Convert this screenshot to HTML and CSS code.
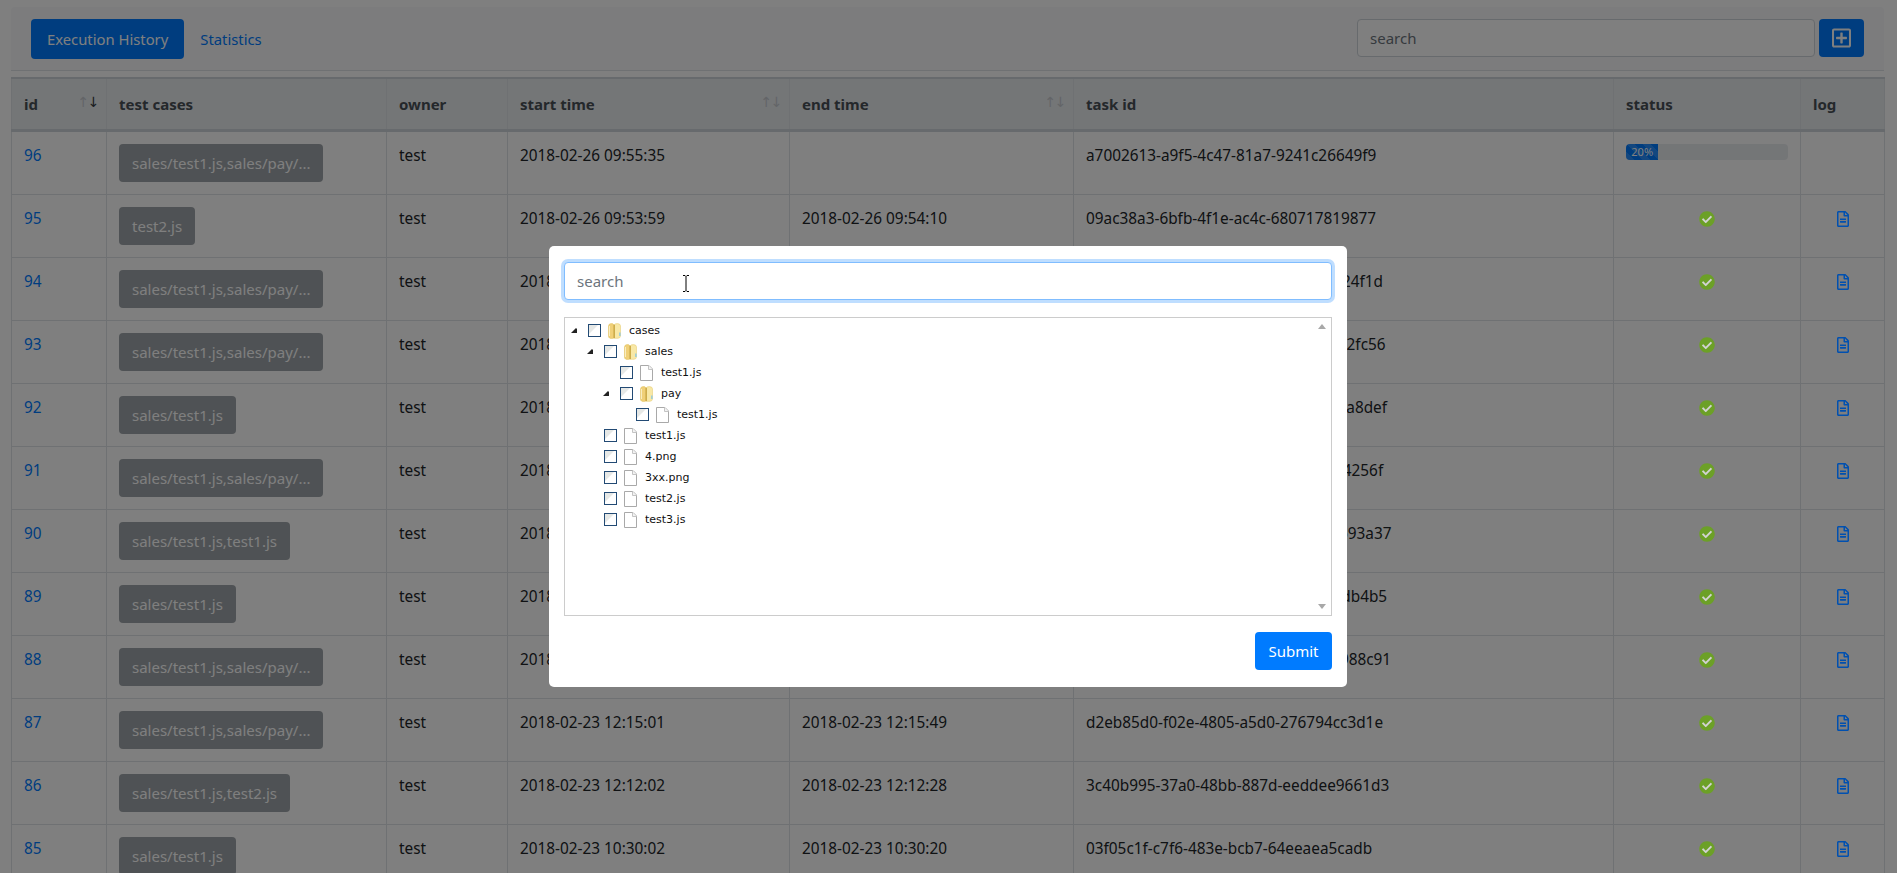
FILE: index.html
```html
<!DOCTYPE html>
<html>
	<head>
		<meta charset="UTF-8">
		<title>Execution History</title>
		<link rel="stylesheet" href="styles.css">
	</head>

	<body>

		<svg class="sprites" xmlns="http://www.w3.org/2000/svg">
			<symbol id="i-check" viewBox="0 0 512 512"><circle cx="256" cy="256" r="210" fill="#d2d2d2"/><path d="M504 256c0 136.967-111.033 248-248 248S8 392.967 8 256 119.033 8 256 8s248 111.033 248 248zM227.314 387.314l184-184c6.248-6.248 6.248-16.379 0-22.627l-22.627-22.627c-6.248-6.249-16.379-6.249-22.628 0L216 308.118l-70.059-70.059c-6.248-6.248-16.379-6.248-22.628 0l-22.627 22.627c-6.248 6.248-6.248 16.379 0 22.627l104 104c6.249 6.249 16.379 6.249 22.628.001z"/></symbol>
			<symbol id="i-log" viewBox="0 0 384 512"><path d="M288 248v28c0 6.6-5.4 12-12 12H108c-6.6 0-12-5.4-12-12v-28c0-6.6 5.4-12 12-12h168c6.6 0 12 5.4 12 12zm-12 72H108c-6.6 0-12 5.4-12 12v28c0 6.6 5.4 12 12 12h168c6.6 0 12-5.4 12-12v-28c0-6.6-5.4-12-12-12zm108-188.1V464c0 26.5-21.5 48-48 48H48c-26.5 0-48-21.5-48-48V48C0 21.5 21.5 0 48 0h204.1C264.8 0 277 5.1 286 14.1L369.9 98c9 8.9 14.1 21.2 14.1 33.9zm-128-80V128h76.1L256 51.9zM336 464V176H232c-13.3 0-24-10.7-24-24V48H48v416h288z"/></symbol>
			<symbol id="i-folder" viewBox="0 0 13 16">
				<path d="M.5 3Q.5 .8 3 .6 5.500 .5 6 2V15Q3 16 1.500 15 .5 14.500 .5 13Z" fill="#f0d078" stroke="#e3c566" stroke-width=".6"/>
				<path d="M6 2Q7 .6 9.500 .6 12.500 .8 12.500 3V13Q12.500 15 10 15.300H6Z" fill="#f8e8a6" stroke="#e8cf78" stroke-width=".6"/>
				<path d="M6.200 1.800V15" stroke="#c39f38" stroke-width="1.200" fill="none"/>
				<path d="M1.500 3V13" stroke="#f9edc0" stroke-width="1" fill="none"/>
				<path d="M11.200 9.500h1.300v3.500h-1.300z" fill="#8ac8e4"/>
			</symbol>
			<symbol id="i-file" viewBox="0 0 13 16">
				<path d="M.5.500H9L12.500 4V15.500H.5Z" fill="#fff" stroke="#a9a9a9"/>
				<path d="M8.500.500V4.500H12.500" fill="#f2f2f2" stroke="#c4c4c4"/>
			</symbol>
			<symbol id="i-check-box" viewBox="0 0 13 13">
				<rect x=".5" y=".5" width="12" height="12" fill="#fff" stroke="#224a74"/>
				<path d="M1 1H10L1 10Z" fill="#e6e8e6"/>
			</symbol>
			<symbol id="i-toggle" viewBox="0 0 6 5"><path d="M0 5 5 0 6 1V5Z"/></symbol>
		</svg>

		<nav class="topbar">
			<div class="tabs">
				<a class="tab tab-active">Execution History</a>
				<a class="tab">Statistics</a>
			</div>
			<div class="topbar-tools">
				<input class="field topbar-search" type="text" placeholder="search">
				<button class="btn btn-add">
					<svg width="19" height="22" viewBox="0 0 448 512"><path fill="currentColor" d="M352 240v32c0 6.600-5.400 12-12 12h-88v88c0 6.600-5.400 12-12 12h-32c-6.600 0-12-5.400-12-12v-88h-88c-6.600 0-12-5.400-12-12v-32c0-6.600 5.400-12 12-12h88v-88c0-6.600 5.400-12 12-12h32c6.600 0 12 5.400 12 12v88h88c6.600 0 12 5.400 12 12zm96-160v352c0 26.500-21.500 48-48 48H48c-26.500 0-48-21.500-48-48V80c0-26.500 21.500-48 48-48h352c26.500 0 48 21.500 48 48zm-48 346V86c0-3.300-2.700-6-6-6H54c-3.300 0-6 2.700-6 6v340c0 3.300 2.700 6 6 6h340c3.300 0 6-2.700 6-6z"/></svg>
				</button>
			</div>
		</nav>

		<table class="runs">
			<colgroup>
				<col class="col-id"><col class="col-cases"><col class="col-owner"><col class="col-start"><col class="col-end"><col class="col-task"><col class="col-status"><col class="col-log">
			</colgroup>
			<thead>
				<tr>
					<th class="sortable">id<span class="sort"><i>↑</i><i class="sort-on">↓</i></span></th>
					<th>test cases</th>
					<th>owner</th>
					<th class="sortable">start time<span class="sort"><i>↑</i><i>↓</i></span></th>
					<th class="sortable">end time<span class="sort"><i>↑</i><i>↓</i></span></th>
					<th>task id</th>
					<th>status</th>
					<th>log</th>
				</tr>
			</thead>
			<tbody>
				<tr>
					<td><a>96</a></td>
					<td><span class="case">sales/test1.js,sales/pay/...</span></td>
					<td>test</td>
					<td>2018-02-26 09:55:35</td>
					<td></td>
					<td>a7002613-a9f5-4c47-81a7-9241c26649f9</td>
					<td><div class="progress"><div class="progress-bar" style="width: 20%">20%</div></div></td>
					<td></td>
				</tr>
				<tr>
					<td><a>95</a></td>
					<td><span class="case">test2.js</span></td>
					<td>test</td>
					<td>2018-02-26 09:53:59</td>
					<td>2018-02-26 09:54:10</td>
					<td>09ac38a3-6bfb-4f1e-ac4c-680717819877</td>
					<td class="icon-cell"><svg class="ok"><use href="#i-check"/></svg></td>
					<td class="icon-cell"><svg class="log"><use href="#i-log"/></svg></td>
				</tr>
				<tr>
					<td><a>94</a></td>
					<td><span class="case">sales/test1.js,sales/pay/...</span></td>
					<td>test</td>
					<td>2018-02-26 09:50:12</td>
					<td>2018-02-26 09:50:48</td>
					<td>51d0e7d2-3ab4-4d19-9e06-7fb1a8124f1d</td>
					<td class="icon-cell"><svg class="ok"><use href="#i-check"/></svg></td>
					<td class="icon-cell"><svg class="log"><use href="#i-log"/></svg></td>
				</tr>
				<tr>
					<td><a>93</a></td>
					<td><span class="case">sales/test1.js,sales/pay/...</span></td>
					<td>test</td>
					<td>2018-02-26 09:44:31</td>
					<td>2018-02-26 09:45:02</td>
					<td>8e2d41b7-60dd-47aa-b3d5-1d9e04a2fc56</td>
					<td class="icon-cell"><svg class="ok"><use href="#i-check"/></svg></td>
					<td class="icon-cell"><svg class="log"><use href="#i-log"/></svg></td>
				</tr>
				<tr>
					<td><a>92</a></td>
					<td><span class="case">sales/test1.js</span></td>
					<td>test</td>
					<td>2018-02-25 18:20:44</td>
					<td>2018-02-25 18:21:03</td>
					<td>d47a90d1-25be-4d38-8d12-6e07b31a8def</td>
					<td class="icon-cell"><svg class="ok"><use href="#i-check"/></svg></td>
					<td class="icon-cell"><svg class="log"><use href="#i-log"/></svg></td>
				</tr>
				<tr>
					<td><a>91</a></td>
					<td><span class="case">sales/test1.js,sales/pay/...</span></td>
					<td>test</td>
					<td>2018-02-25 17:02:19</td>
					<td>2018-02-25 17:02:58</td>
					<td>3d18bc06-d972-4e01-a6c4-90bd2e74256f</td>
					<td class="icon-cell"><svg class="ok"><use href="#i-check"/></svg></td>
					<td class="icon-cell"><svg class="log"><use href="#i-log"/></svg></td>
				</tr>
				<tr>
					<td><a>90</a></td>
					<td><span class="case">sales/test1.js,test1.js</span></td>
					<td>test</td>
					<td>2018-02-24 15:41:07</td>
					<td>2018-02-24 15:41:33</td>
					<td>e60a27d4-18db-4d75-b209-5d7d1d693a37</td>
					<td class="icon-cell"><svg class="ok"><use href="#i-check"/></svg></td>
					<td class="icon-cell"><svg class="log"><use href="#i-log"/></svg></td>
				</tr>
				<tr>
					<td><a>89</a></td>
					<td><span class="case">sales/test1.js</span></td>
					<td>test</td>
					<td>2018-02-24 11:16:50</td>
					<td>2018-02-24 11:17:08</td>
					<td>72bd5e19-d4a0-4b63-97f2-a013e86db4b5</td>
					<td class="icon-cell"><svg class="ok"><use href="#i-check"/></svg></td>
					<td class="icon-cell"><svg class="log"><use href="#i-log"/></svg></td>
				</tr>
				<tr>
					<td><a>88</a></td>
					<td><span class="case">sales/test1.js,sales/pay/...</span></td>
					<td>test</td>
					<td>2018-02-23 12:30:26</td>
					<td>2018-02-23 12:31:01</td>
					<td>b905d3d8-7d14-4d26-8bd0-42d6d1988c91</td>
					<td class="icon-cell"><svg class="ok"><use href="#i-check"/></svg></td>
					<td class="icon-cell"><svg class="log"><use href="#i-log"/></svg></td>
				</tr>
				<tr>
					<td><a>87</a></td>
					<td><span class="case">sales/test1.js,sales/pay/...</span></td>
					<td>test</td>
					<td>2018-02-23 12:15:01</td>
					<td>2018-02-23 12:15:49</td>
					<td>d2eb85d0-f02e-4805-a5d0-276794cc3d1e</td>
					<td class="icon-cell"><svg class="ok"><use href="#i-check"/></svg></td>
					<td class="icon-cell"><svg class="log"><use href="#i-log"/></svg></td>
				</tr>
				<tr>
					<td><a>86</a></td>
					<td><span class="case">sales/test1.js,test2.js</span></td>
					<td>test</td>
					<td>2018-02-23 12:12:02</td>
					<td>2018-02-23 12:12:28</td>
					<td>3c40b995-37a0-48bb-887d-eeddee9661d3</td>
					<td class="icon-cell"><svg class="ok"><use href="#i-check"/></svg></td>
					<td class="icon-cell"><svg class="log"><use href="#i-log"/></svg></td>
				</tr>
				<tr>
					<td><a>85</a></td>
					<td><span class="case">sales/test1.js</span></td>
					<td>test</td>
					<td>2018-02-23 10:30:02</td>
					<td>2018-02-23 10:30:20</td>
					<td>03f05c1f-c7f6-483e-bcb7-64eeaea5cadb</td>
					<td class="icon-cell"><svg class="ok"><use href="#i-check"/></svg></td>
					<td class="icon-cell"><svg class="log"><use href="#i-log"/></svg></td>
				</tr>
			</tbody>
		</table>

		<div class="backdrop"></div>

		<div class="modal">
			<div class="dialog">
				<div class="search-wrap">
					<input class="field field-focus" type="text" placeholder="search">
					<svg class="ibeam" width="8" height="17" viewBox="0 0 8 17"><path d="M1 .5h2l1 1 1-1h2M4 1.500v14M1 16.500h2l1-1 1 1h2" fill="none" stroke="#000"/></svg>
				</div>
				<div class="tree">
					<ul>
						<li>
							<div class="node"><svg class="toggle"><use href="#i-toggle"/></svg><svg class="box"><use href="#i-check-box"/></svg><svg class="node-icon"><use href="#i-folder"/></svg><span>cases</span></div>
							<ul>
								<li>
									<div class="node"><svg class="toggle"><use href="#i-toggle"/></svg><svg class="box"><use href="#i-check-box"/></svg><svg class="node-icon"><use href="#i-folder"/></svg><span>sales</span></div>
									<ul>
										<li><div class="node"><span class="toggle"></span><svg class="box"><use href="#i-check-box"/></svg><svg class="node-icon"><use href="#i-file"/></svg><span>test1.js</span></div></li>
										<li>
											<div class="node"><svg class="toggle"><use href="#i-toggle"/></svg><svg class="box"><use href="#i-check-box"/></svg><svg class="node-icon"><use href="#i-folder"/></svg><span>pay</span></div>
											<ul>
												<li><div class="node"><span class="toggle"></span><svg class="box"><use href="#i-check-box"/></svg><svg class="node-icon"><use href="#i-file"/></svg><span>test1.js</span></div></li>
											</ul>
										</li>
									</ul>
								</li>
								<li><div class="node"><span class="toggle"></span><svg class="box"><use href="#i-check-box"/></svg><svg class="node-icon"><use href="#i-file"/></svg><span>test1.js</span></div></li>
								<li><div class="node"><span class="toggle"></span><svg class="box"><use href="#i-check-box"/></svg><svg class="node-icon"><use href="#i-file"/></svg><span>4.png</span></div></li>
								<li><div class="node"><span class="toggle"></span><svg class="box"><use href="#i-check-box"/></svg><svg class="node-icon"><use href="#i-file"/></svg><span>3xx.png</span></div></li>
								<li><div class="node"><span class="toggle"></span><svg class="box"><use href="#i-check-box"/></svg><svg class="node-icon"><use href="#i-file"/></svg><span>test2.js</span></div></li>
								<li><div class="node"><span class="toggle"></span><svg class="box"><use href="#i-check-box"/></svg><svg class="node-icon"><use href="#i-file"/></svg><span>test3.js</span></div></li>
							</ul>
						</li>
					</ul>
					<span class="scroll-arrow scroll-up"></span>
					<span class="scroll-arrow scroll-down"></span>
				</div>
				<div class="dialog-foot">
					<button class="btn btn-submit">Submit</button>
				</div>
			</div>
		</div>

	</body>

</html>
```

FILE: styles.css
```css
* { box-sizing: border-box }

html, body { height: 100% }

body {
	margin: 0;
	padding: 7px 13px 0 11px;
	overflow: hidden;
	background: #fff;
	color: #212529;
	font: 15px/24px "Noto Sans", sans-serif;
}

.sprites { display: none }

/* top bar */
.topbar {
	height: 64px;
	padding: 12px 20px;
	display: flex;
	align-items: flex-start;
	justify-content: space-between;
	background: #f8f9fa;
	border-bottom: 1px solid #dee2e6;
	border-radius: 4px 4px 0 0;
}

.tabs {
	display: flex;
	font-size: 14.8px;
}

.tab {
	height: 40px;
	padding: 8px 16px;
	color: #007bff;
	border-radius: 4px;
}

.tab-active {
	background: #007bff;
	color: #fff;
}

.topbar-tools {
	display: flex;
	gap: 4px;
}

.field {
	width: 100%;
	height: 38px;
	padding: 6px 12px;
	font: inherit;
	color: #495057;
	background: #fff;
	border: 1px solid #ced4da;
	border-radius: 4px;
	outline: 0;
}

.field::placeholder { color: #6c757d }

.topbar-search {
	width: 458px;
}

.field-focus {
	border-color: #80bdff;
	box-shadow: 0 0 0 3px rgba(0, 123, 255, .25);
}

.btn {
	height: 38px;
	border: 0;
	border-radius: 4px;
	background: #007bff;
	color: #fff;
	font: inherit;
}

.btn-add {
	width: 45px;
	display: flex;
	align-items: center;
	justify-content: center;
}

/* table */
.runs {
	width: 1873px;
	margin-top: 6px;
	table-layout: fixed;
	border-collapse: collapse;
}

.col-id { width: 95px }
.col-cases { width: 280px }
.col-owner { width: 121px }
.col-start { width: 282px }
.col-end { width: 284px }
.col-task { width: 540px }
.col-status { width: 187px }
.col-log { width: 84px }

.runs th, .runs td {
	padding: 11px 12px 12px;
	border: 1px solid #dee2e6;
	vertical-align: top;
	text-align: left;
}

.runs th {
	height: 52px;
	padding-top: 13px;
	background: #e9ecef;
	color: #495057;
	font-weight: 700;
	border-top: 2px solid #ced4da;
	border-bottom: 3px solid #ced4da;
}

.runs td {
	height: 63px;
	font-size: 15.35px;
}

.runs a { color: #007bff }

.sortable { position: relative }

.sort {
	position: absolute;
	top: 13px;
	right: 8px;
	display: flex;
	font: 14px/20px "DejaVu Sans", sans-serif;
	letter-spacing: -1.500px;
	color: #c6cacf;
}

.sort i { font-style: normal }

.sort .sort-on { color: #343a40 }

.case {
	display: block;
	width: fit-content;
	height: 38px;
	margin-top: 1px;
	padding: 7px 13px;
	background: #6c757d;
	color: #fff;
	border-radius: 4px;
	opacity: .65;
	font-size: 15px;
	white-space: nowrap;
}

.progress {
	height: 16px;
	margin-top: 1px;
	background: #e9ecef;
	border-radius: 4px;
	overflow: hidden;
	font-size: 11px;
	line-height: 16px;
}

.progress-bar {
	height: 100%;
	text-align: center;
	color: #fff;
	background-color: #007bff;
	background-image: linear-gradient(45deg, rgba(255,255,255,.15) 25%, transparent 25%, transparent 50%, rgba(255,255,255,.15) 50%, rgba(255,255,255,.15) 75%, transparent 75%, transparent);
	background-size: 16px 16px;
}

.icon-cell { text-align: center !important }

.ok, .log {
	position: relative;
	z-index: 2;
	height: 16px;
	margin-top: 5px;
	display: inline-block;
	vertical-align: top;
}

.ok {
	width: 16px;
	fill: #6ca027;
}

.log {
	width: 12px;
	fill: #0050b0;
}

/* modal */
.backdrop {
	position: fixed;
	inset: 0;
	background: rgba(0, 0, 0, .5);
	z-index: 1;
}

.modal {
	position: fixed;
	inset: 0;
	z-index: 3;
	display: flex;
	justify-content: center;
	align-items: flex-start;
	padding: 246px 1px 0 0;
}

.dialog {
	width: 798px;
	height: 441px;
	padding: 16px 15px;
	background: #fff;
	border-radius: 5px;
	display: flex;
	flex-direction: column;
	gap: 16px;
}

.search-wrap { position: relative }

.ibeam {
	position: absolute;
	left: 118px;
	top: 13px;
}

.tree {
	position: relative;
	height: 299px;
	margin-top: 1px;
	padding-top: 2px;
	border: 1px solid #ccc;
	font: 11px/21px "DejaVu Sans", sans-serif;
	color: #111;
}

.tree ul {
	margin: 0;
	padding: 0 0 0 16px;
	list-style: none;
}

.tree > ul { padding-left: 6px }

.node {
	height: 21px;
	display: flex;
	align-items: center;
}

.toggle {
	width: 6px;
	height: 5px;
	margin-right: 11px;
	flex: none;
	fill: #222;
}

.box {
	width: 13px;
	height: 13px;
	margin-right: 7px;
	flex: none;
}

.node-icon {
	width: 13px;
	height: 16px;
	margin-right: 8px;
	flex: none;
}

.scroll-arrow {
	position: absolute;
	right: 5px;
	width: 0;
	height: 0;
	border: 4px solid transparent;
	border-top-width: 0;
	border-bottom: 5px solid #a8a8a8;
}

.scroll-up { top: 6px }

.scroll-down {
	bottom: 6px;
	transform: rotate(180deg);
}

.dialog-foot {
	display: flex;
	justify-content: flex-end;
}

.btn-submit { width: 77px }
```
